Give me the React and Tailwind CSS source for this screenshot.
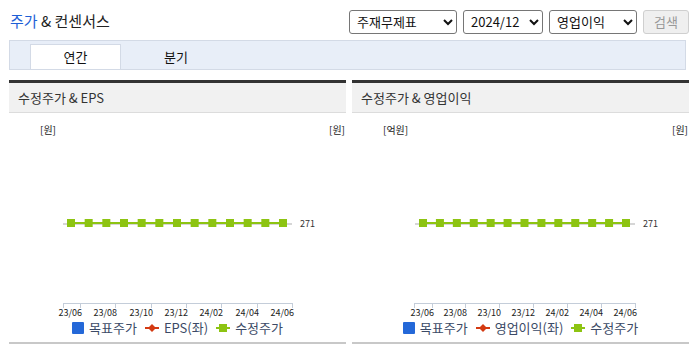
const FONT = { fontFamily: '"Noto Sans CJK KR", "Noto Sans", sans-serif' };

function Chart({ lineFrom, lineTo, p0, p1, ticks, labelX, unitL }) {
  const pts = Array.from({ length: 13 }, (_, i) => p0 + ((p1 - p0) * i) / 12);
  const labels = ['23/06', '23/08', '23/10', '23/12', '24/02', '24/04', '24/06'];
  return (
    <svg width="337" height="205" className="block" style={FONT}>
      <text x="31" y="21" fontSize="10" fill="#222">{unitL}</text>
      <text x="320" y="21" fontSize="10" fill="#222">[원]</text>
      <line x1={lineFrom} x2={lineTo} y1="111" y2="111" stroke="#d6d6d6" strokeWidth="2" />
      <line x1={pts[0]} x2={pts[12]} y1="110" y2="110" stroke="#8dc412" strokeWidth="2" />
      {pts.map((x, i) => (
        <rect key={i} x={x - 4} y="106" width="8" height="8" fill="#8dc412" />
      ))}
      <text x={labelX} y="114" fontSize="9" fill="#333">271</text>
      <line x1={ticks[0]} x2={ticks[ticks.length - 1]} y1="190.5" y2="190.5" stroke="#c4cdd9" />
      {ticks.map((t, i) => (
        <line key={i} x1={t + 0.5} x2={t + 0.5} y1="190" y2="195" stroke="#c4cdd9" />
      ))}
      {labels.map((l, i) => (
        <text key={l} x={ticks[i + 1] + 2} y="203" fontSize="9" fill="#222" textAnchor="end">
          {l}
        </text>
      ))}
    </svg>
  );
}

function Legend({ mid }) {
  return (
    <div className="flex items-center justify-center gap-[8px] h-[20px] text-[13px] text-[#3b4a66]" style={FONT}>
      <span className="flex items-center gap-[5px]">
        <span className="w-[12px] h-[12px] bg-[#2468d8] rounded-[1px]" />
        목표주가
      </span>
      <span className="flex items-center gap-[5px]">
        <svg width="14" height="8">
          <line x1="0" x2="14" y1="4" y2="4" stroke="#d43a12" strokeWidth="2" />
          <path d="M7 0 L11 4 L7 8 L3 4 Z" fill="#d43a12" />
        </svg>
        {mid}
      </span>
      <span className="flex items-center gap-[5px]">
        <svg width="14" height="8">
          <line x1="0" x2="14" y1="4" y2="4" stroke="#8dc412" strokeWidth="2" />
          <rect x="3" y="0" width="8" height="8" fill="#8dc412" />
        </svg>
        수정주가
      </span>
    </div>
  );
}

function Panel({ title, mid, chart }) {
  return (
    <div className="w-[337px] border-t-[3px] border-[#333] border-b-2 border-b-[#c8c8c8]">
      <div className="h-[30px] bg-[#f1f1f1] border-b border-[#dcdcdc] flex items-center px-[9px] text-[13px] text-[#333]" style={FONT}>
        {title}
      </div>
      <Chart {...chart} />
      <Legend mid={mid} />
      <div className="h-[4px]" />
    </div>
  );
}

function Sel({ w, value, opts }) {
  return (
    <select
      defaultValue={value}
      className="h-[24px] rounded-[3px] border border-[#767676] bg-white text-[13px] text-[#111] px-[3px]"
      style={{ ...FONT, width: w }}
    >
      {opts.map((o) => (
        <option key={o}>{o}</option>
      ))}
    </select>
  );
}

export default function App() {
  return (
    <div className="w-[695px] h-[349px] bg-white px-[9px] pt-[9px] overflow-hidden" style={FONT}>
      <div className="flex items-center justify-between h-[25px]">
        <div className="text-[15px] text-[#222] pl-[1px]">
          <span className="text-[#1e5fd6]">주가</span> &amp; 컨센서스
        </div>
        <div className="flex items-center gap-[6px] -mr-[3px]">
          <Sel w={108} value="주재무제표" opts={['주재무제표', 'K-IFRS(연결)']} />
          <Sel w={80} value="2024/12" opts={['2024/12', '2023/12']} />
          <Sel w={88} value="영업이익" opts={['영업이익', '매출액']} />
          <button
            disabled
            className="h-[24px] w-[46px] rounded-[3px] border border-[#cfcfcf] bg-[#efefef] text-[13px] text-[#999]"
          >
            검색
          </button>
        </div>
      </div>
      <div className="mt-[6px] h-[30px] bg-[#e8eef8] border border-[#d3dae6] flex items-end pl-[20px]">
        <div className="w-[91px] h-[25px] bg-white border border-b-0 border-[#d3dae6] flex items-center justify-center text-[13px] text-[#111]">
          연간
        </div>
        <div className="w-[110px] h-[25px] flex items-center justify-center text-[13px] text-[#111]">
          분기
        </div>
      </div>
      <div className="mt-[10px] flex gap-[6px]">
        <Panel
          title="수정주가 & EPS"
          mid="EPS(좌)"
          chart={{
            unitL: '[원]',
            lineFrom: 54,
            lineTo: 283,
            p0: 62,
            p1: 274,
            ticks: [54, 71, 106, 142, 177, 212, 248, 283],
            labelX: 291,
          }}
        />
        <Panel
          title="수정주가 & 영업이익"
          mid="영업이익(좌)"
          chart={{
            unitL: '[억원]',
            lineFrom: 63,
            lineTo: 283,
            p0: 71,
            p1: 274,
            ticks: [62, 80, 113, 147, 181, 215, 249, 283],
            labelX: 291,
          }}
        />
      </div>
    </div>
  );
}
